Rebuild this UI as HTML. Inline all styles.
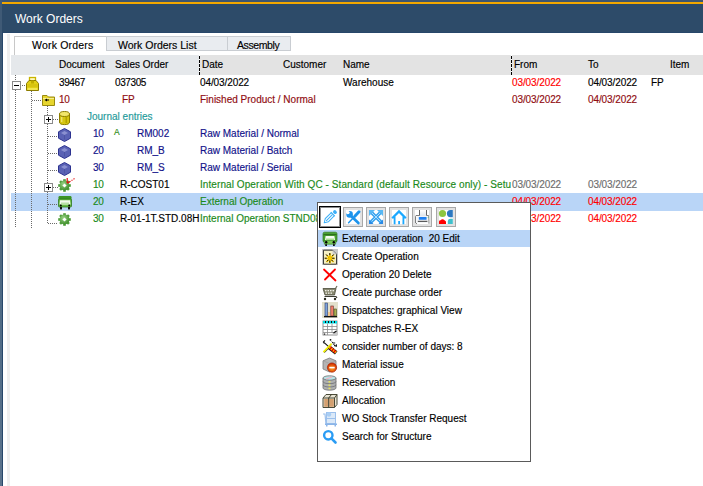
<!DOCTYPE html>
<html><head><meta charset="utf-8"><style>
html,body{margin:0;padding:0;}
body{width:703px;height:486px;position:relative;overflow:hidden;background:#fff;font-family:"Liberation Sans", sans-serif;}
.t{position:absolute;white-space:nowrap;-webkit-text-stroke:0.15px currentColor;}
svg{overflow:visible}
</style></head><body>
<div style="position:absolute;left:0px;top:0px;width:703px;height:33px;background:#2d4b69"></div>
<div style="position:absolute;left:0px;top:0px;width:703px;height:2px;background:#3d5670"></div>
<div style="position:absolute;left:2px;top:2px;width:701px;height:2px;background:#f2a800"></div>
<div style="position:absolute;left:0px;top:0px;width:2px;height:486px;background:linear-gradient(to bottom,#3f5a76 0px,#3f5a76 60px,#4a6279 180px,#4e6a85 300px,#5a728b 486px)"></div>
<div style="position:absolute;left:2px;top:32px;width:1px;height:454px;background:#27476a"></div>
<div style="position:absolute;left:2px;top:32px;width:701px;height:1px;background:#27476a"></div>
<div style="position:absolute;left:7px;top:34px;width:3px;height:452px;background:#efefef"></div>
<div class="t" style="left:15px;top:12px;font-size:12px;line-height:14px;color:#ffffff;-webkit-text-stroke:0;">Work Orders</div>
<div style="position:absolute;left:106px;top:36px;width:185px;height:15px;background:#e9ecf0;border:1px solid #c9cdd2;box-sizing:border-box"></div>
<div style="position:absolute;left:227px;top:37px;width:1px;height:13px;background:#c9cdd2"></div>
<div style="position:absolute;left:14px;top:36px;width:92px;height:19px;background:#ffffff;border:1px solid #c8c8c8;border-bottom:none;border-right:none;box-sizing:border-box"></div>
<div class="t" style="left:32px;top:39px;font-size:10.5px;line-height:12px;color:#000;letter-spacing:0.2px">Work Orders</div>
<div class="t" style="left:118px;top:39px;font-size:10.5px;line-height:12px;color:#000;">Work Orders List</div>
<div class="t" style="left:237px;top:39px;font-size:10.5px;line-height:12px;color:#000;letter-spacing:-0.4px">Assembly</div>
<div style="position:absolute;left:11px;top:55px;width:188px;height:20px;background:#e5e8eb"></div>
<div style="position:absolute;left:199px;top:55px;width:504px;height:20px;background:#e3e3e3"></div>
<div class="t" style="left:59px;top:59px;font-size:10px;line-height:12px;color:#000;">Document</div>
<div class="t" style="left:115px;top:59px;font-size:10px;line-height:12px;color:#000;">Sales Order</div>
<div class="t" style="left:202px;top:59px;font-size:10px;line-height:12px;color:#000;">Date</div>
<div class="t" style="left:283px;top:59px;font-size:10px;line-height:12px;color:#000;">Customer</div>
<div class="t" style="left:343px;top:59px;font-size:10px;line-height:12px;color:#000;">Name</div>
<div class="t" style="left:514px;top:59px;font-size:10px;line-height:12px;color:#000;">From</div>
<div class="t" style="left:588px;top:59px;font-size:10px;line-height:12px;color:#000;">To</div>
<div class="t" style="left:670px;top:59px;font-size:10px;line-height:12px;color:#000;">Item</div>
<svg style="position:absolute;left:199px;top:55px" width="1" height="20" viewBox="0 0 1 20"><rect x="0" y="0" width="1" height="20" fill="#fff"/><line x1="0.5" y1="1" x2="0.5" y2="20" stroke="#000" stroke-width="1" stroke-dasharray="3,1"/></svg>
<svg style="position:absolute;left:511px;top:55px" width="1" height="20" viewBox="0 0 1 20"><rect x="0" y="0" width="1" height="20" fill="#fff"/><line x1="0.5" y1="1" x2="0.5" y2="20" stroke="#000" stroke-width="1" stroke-dasharray="3,1"/></svg>
<div style="position:absolute;left:11px;top:193px;width:692px;height:18px;background:#b9d5f7"></div>
<svg style="position:absolute;left:15px;top:75px" width="1" height="6" viewBox="0 0 1 6"><line x1="0.5" y1="0" x2="0.5" y2="6" stroke="#6a6a6a" stroke-width="1" stroke-dasharray="1,1"/></svg>
<svg style="position:absolute;left:15px;top:90px" width="1" height="138" viewBox="0 0 1 138"><line x1="0.5" y1="0" x2="0.5" y2="138" stroke="#6a6a6a" stroke-width="1" stroke-dasharray="1,1"/></svg>
<svg style="position:absolute;left:31px;top:91px" width="1" height="137" viewBox="0 0 1 137"><line x1="0.5" y1="0" x2="0.5" y2="137" stroke="#6a6a6a" stroke-width="1" stroke-dasharray="1,1"/></svg>
<svg style="position:absolute;left:22px;top:85px" width="4" height="1" viewBox="0 0 4 1"><line x1="0" y1="0.5" x2="4" y2="0.5" stroke="#6a6a6a" stroke-width="1" stroke-dasharray="1,1"/></svg>
<svg style="position:absolute;left:32px;top:100px" width="10" height="1" viewBox="0 0 10 1"><line x1="0" y1="0.5" x2="10" y2="0.5" stroke="#6a6a6a" stroke-width="1" stroke-dasharray="1,1"/></svg>
<svg style="position:absolute;left:47px;top:106px" width="1" height="9" viewBox="0 0 1 9"><line x1="0.5" y1="0" x2="0.5" y2="9" stroke="#6a6a6a" stroke-width="1" stroke-dasharray="1,1"/></svg>
<svg style="position:absolute;left:47px;top:124px" width="1" height="59" viewBox="0 0 1 59"><line x1="0.5" y1="0" x2="0.5" y2="59" stroke="#6a6a6a" stroke-width="1" stroke-dasharray="1,1"/></svg>
<svg style="position:absolute;left:47px;top:192px" width="1" height="31" viewBox="0 0 1 31"><line x1="0.5" y1="0" x2="0.5" y2="31" stroke="#6a6a6a" stroke-width="1" stroke-dasharray="1,1"/></svg>
<svg style="position:absolute;left:53px;top:119px" width="6" height="1" viewBox="0 0 6 1"><line x1="0" y1="0.5" x2="6" y2="0.5" stroke="#6a6a6a" stroke-width="1" stroke-dasharray="1,1"/></svg>
<svg style="position:absolute;left:48px;top:136px" width="10" height="1" viewBox="0 0 10 1"><line x1="0" y1="0.5" x2="10" y2="0.5" stroke="#6a6a6a" stroke-width="1" stroke-dasharray="1,1"/></svg>
<svg style="position:absolute;left:48px;top:153px" width="10" height="1" viewBox="0 0 10 1"><line x1="0" y1="0.5" x2="10" y2="0.5" stroke="#6a6a6a" stroke-width="1" stroke-dasharray="1,1"/></svg>
<svg style="position:absolute;left:48px;top:170px" width="10" height="1" viewBox="0 0 10 1"><line x1="0" y1="0.5" x2="10" y2="0.5" stroke="#6a6a6a" stroke-width="1" stroke-dasharray="1,1"/></svg>
<svg style="position:absolute;left:53px;top:187px" width="5" height="1" viewBox="0 0 5 1"><line x1="0" y1="0.5" x2="5" y2="0.5" stroke="#6a6a6a" stroke-width="1" stroke-dasharray="1,1"/></svg>
<svg style="position:absolute;left:48px;top:204px" width="10" height="1" viewBox="0 0 10 1"><line x1="0" y1="0.5" x2="10" y2="0.5" stroke="#6a6a6a" stroke-width="1" stroke-dasharray="1,1"/></svg>
<svg style="position:absolute;left:48px;top:223px" width="10" height="1" viewBox="0 0 10 1"><line x1="0" y1="0.5" x2="10" y2="0.5" stroke="#6a6a6a" stroke-width="1" stroke-dasharray="1,1"/></svg>
<svg style="position:absolute;left:12px;top:81px" width="9" height="9" viewBox="0 0 9 9"><rect x="0.5" y="0.5" width="8" height="8" fill="#fff" stroke="#8a8a8a"/><line x1="2" y1="4.5" x2="7" y2="4.5" stroke="#000"/></svg>
<svg style="position:absolute;left:44px;top:115px" width="9" height="9" viewBox="0 0 9 9"><rect x="0.5" y="0.5" width="8" height="8" fill="#fff" stroke="#8a8a8a"/><line x1="2" y1="4.5" x2="7" y2="4.5" stroke="#000"/><line x1="4.5" y1="2" x2="4.5" y2="7" stroke="#000"/></svg>
<svg style="position:absolute;left:44px;top:183px" width="9" height="9" viewBox="0 0 9 9"><rect x="0.5" y="0.5" width="8" height="8" fill="#fff" stroke="#8a8a8a"/><line x1="2" y1="4.5" x2="7" y2="4.5" stroke="#000"/><line x1="4.5" y1="2" x2="4.5" y2="7" stroke="#000"/></svg>
<svg style="position:absolute;left:26px;top:77px" width="13" height="14" viewBox="0 0 13 14"><rect x="3.5" y="0.5" width="6" height="5" fill="#fff8c0" stroke="#c8b400" stroke-width="1.3"/>
<path d="M0.5 6.5 L3 3.5 L10 3.5 L12.5 6.5 L12.5 13.5 L0.5 13.5 Z" fill="#e2cf14" stroke="#8c7c00"/>
<rect x="5" y="3.5" width="3" height="3" fill="#c0ac00"/>
<rect x="1.5" y="7" width="10" height="3" fill="#d8c410"/>
<rect x="1.5" y="11" width="10" height="2" fill="#f2e650"/></svg>
<svg style="position:absolute;left:42px;top:94px" width="13" height="12" viewBox="0 0 13 12"><path d="M0.5 1.5 L5 1.5 L6.5 3 L12.5 3 L12.5 11.5 L0.5 11.5 Z" fill="#e6d52e" stroke="#9a8a10"/>
<path d="M1 4.5 L12 4.5" stroke="#f6ee90" stroke-width="1"/>
<path d="M2.5 6 L5 4.5 L5 7.5 Z M4.5 5.5 L7 5.5 L7 6.5 L4.5 6.5 Z" fill="#000"/></svg>
<svg style="position:absolute;left:59px;top:111px" width="11" height="14" viewBox="0 0 11 14"><path d="M0.5 3 L0.5 11 A5 2.6 0 0 0 10.5 11 L10.5 3" fill="#d6c612" stroke="#8c7c00"/>
<ellipse cx="5.5" cy="3" rx="5" ry="2.5" fill="#f2e66a" stroke="#8c7c00"/>
<rect x="6.5" y="5.5" width="1.6" height="6.5" fill="#b4a400"/>
<rect x="2" y="6" width="1.4" height="5" fill="#eee070"/></svg>
<svg style="position:absolute;left:58px;top:128px" width="13" height="14" viewBox="0 0 13 14"><path d="M6.5 0.5 L12.5 3.8 L12.5 10.2 L6.5 13.5 L0.5 10.2 L0.5 3.8 Z" fill="#5a62b4" stroke="#2c3290"/>
<path d="M3 5 L6.5 3 L10 5 L6.5 7 Z" fill="#8a90d0"/>
<path d="M6.5 7 L6.5 11.5" stroke="#4a50a0" stroke-width="0.8"/></svg>
<svg style="position:absolute;left:58px;top:145px" width="13" height="14" viewBox="0 0 13 14"><path d="M6.5 0.5 L12.5 3.8 L12.5 10.2 L6.5 13.5 L0.5 10.2 L0.5 3.8 Z" fill="#5a62b4" stroke="#2c3290"/>
<path d="M3 5 L6.5 3 L10 5 L6.5 7 Z" fill="#8a90d0"/>
<path d="M6.5 7 L6.5 11.5" stroke="#4a50a0" stroke-width="0.8"/></svg>
<svg style="position:absolute;left:58px;top:162px" width="13" height="14" viewBox="0 0 13 14"><path d="M6.5 0.5 L12.5 3.8 L12.5 10.2 L6.5 13.5 L0.5 10.2 L0.5 3.8 Z" fill="#5a62b4" stroke="#2c3290"/>
<path d="M3 5 L6.5 3 L10 5 L6.5 7 Z" fill="#8a90d0"/>
<path d="M6.5 7 L6.5 11.5" stroke="#4a50a0" stroke-width="0.8"/></svg>
<svg style="position:absolute;left:58px;top:179px" width="13" height="14" viewBox="0 0 13 14"><defs><radialGradient id="gg" cx="0.4" cy="0.35" r="0.7"><stop offset="0" stop-color="#9ad486"/><stop offset="1" stop-color="#3a8a26"/></radialGradient></defs><rect x="5.2" y="0.2" width="2.6" height="3" fill="#4e9e38" transform="rotate(0.0 6.5 6.5)"/><rect x="5.2" y="0.2" width="2.6" height="3" fill="#4e9e38" transform="rotate(45.0 6.5 6.5)"/><rect x="5.2" y="0.2" width="2.6" height="3" fill="#4e9e38" transform="rotate(90.0 6.5 6.5)"/><rect x="5.2" y="0.2" width="2.6" height="3" fill="#4e9e38" transform="rotate(135.0 6.5 6.5)"/><rect x="5.2" y="0.2" width="2.6" height="3" fill="#4e9e38" transform="rotate(180.0 6.5 6.5)"/><rect x="5.2" y="0.2" width="2.6" height="3" fill="#4e9e38" transform="rotate(225.0 6.5 6.5)"/><rect x="5.2" y="0.2" width="2.6" height="3" fill="#4e9e38" transform="rotate(270.0 6.5 6.5)"/><rect x="5.2" y="0.2" width="2.6" height="3" fill="#4e9e38" transform="rotate(315.0 6.5 6.5)"/><circle cx="6.5" cy="6.5" r="4.9" fill="url(#gg)"/><path d="M6.5 4.4 L8.6 6.5 L6.5 8.6 L4.4 6.5 Z" fill="#fff"/></svg>
<svg style="position:absolute;left:66px;top:177px" width="9" height="7" viewBox="0 0 9 7"><path d="M1.2 6.2 L1.2 1 M1.2 6.2 L4.5 4.2 M5.5 3.5 L6.5 3 M7.5 2.2 L8.5 1.6" stroke="#e81010" stroke-width="1.2" fill="none"/></svg>
<svg style="position:absolute;left:58px;top:196px" width="14" height="14" viewBox="0 0 14 14"><rect x="0.5" y="0" width="13" height="4.5" rx="1.2" fill="#3a9426"/>
<rect x="0.5" y="3" width="13" height="8" rx="1" fill="#66bb44" stroke="#2f7a1e" stroke-width="0.8"/>
<path d="M2 4.2 L12 4.2 L12.5 8.5 L1.5 8.5 Z" fill="#f2faee"/>
<rect x="3" y="6.5" width="8" height="2" fill="#b8e0a8"/>
<circle cx="2.8" cy="9.6" r="1" fill="#000"/><circle cx="11.2" cy="9.6" r="1" fill="#000"/>
<rect x="2" y="11" width="2" height="2.4" fill="#111"/><rect x="10" y="11" width="2" height="2.4" fill="#111"/></svg>
<svg style="position:absolute;left:58px;top:213px" width="13" height="14" viewBox="0 0 13 14"><defs><radialGradient id="gg" cx="0.4" cy="0.35" r="0.7"><stop offset="0" stop-color="#9ad486"/><stop offset="1" stop-color="#3a8a26"/></radialGradient></defs><rect x="5.2" y="0.2" width="2.6" height="3" fill="#4e9e38" transform="rotate(0.0 6.5 6.5)"/><rect x="5.2" y="0.2" width="2.6" height="3" fill="#4e9e38" transform="rotate(45.0 6.5 6.5)"/><rect x="5.2" y="0.2" width="2.6" height="3" fill="#4e9e38" transform="rotate(90.0 6.5 6.5)"/><rect x="5.2" y="0.2" width="2.6" height="3" fill="#4e9e38" transform="rotate(135.0 6.5 6.5)"/><rect x="5.2" y="0.2" width="2.6" height="3" fill="#4e9e38" transform="rotate(180.0 6.5 6.5)"/><rect x="5.2" y="0.2" width="2.6" height="3" fill="#4e9e38" transform="rotate(225.0 6.5 6.5)"/><rect x="5.2" y="0.2" width="2.6" height="3" fill="#4e9e38" transform="rotate(270.0 6.5 6.5)"/><rect x="5.2" y="0.2" width="2.6" height="3" fill="#4e9e38" transform="rotate(315.0 6.5 6.5)"/><circle cx="6.5" cy="6.5" r="4.9" fill="url(#gg)"/><path d="M6.5 4.4 L8.6 6.5 L6.5 8.6 L4.4 6.5 Z" fill="#fff"/></svg>
<div class="t" style="left:59px;top:77px;font-size:10px;line-height:12px;color:#000;letter-spacing:-0.4px;">39467</div>
<div class="t" style="left:115px;top:77px;font-size:10px;line-height:12px;color:#000;letter-spacing:-0.4px;">037305</div>
<div class="t" style="left:200px;top:77px;font-size:10px;line-height:12px;color:#000;letter-spacing:-0.1px;">04/03/2022</div>
<div class="t" style="left:343px;top:77px;font-size:10px;line-height:12px;color:#000;">Warehouse</div>
<div class="t" style="left:512px;top:77px;font-size:10px;line-height:12px;color:#ff0000;letter-spacing:-0.1px;">03/03/2022</div>
<div class="t" style="left:588px;top:77px;font-size:10px;line-height:12px;color:#000;letter-spacing:-0.1px;">04/03/2022</div>
<div class="t" style="left:651px;top:77px;font-size:10px;line-height:12px;color:#000;">FP</div>
<div class="t" style="left:59px;top:94px;font-size:10px;line-height:12px;color:#900c10;letter-spacing:-0.4px;">10</div>
<div class="t" style="left:122px;top:94px;font-size:10px;line-height:12px;color:#900c10;">FP</div>
<div class="t" style="left:200px;top:94px;font-size:10px;line-height:12px;color:#900c10;">Finished Product / Normal</div>
<div class="t" style="left:512px;top:94px;font-size:10px;line-height:12px;color:#900c10;letter-spacing:-0.1px;">03/03/2022</div>
<div class="t" style="left:588px;top:94px;font-size:10px;line-height:12px;color:#900c10;letter-spacing:-0.1px;">04/03/2022</div>
<div class="t" style="left:87px;top:111px;font-size:10px;line-height:12px;color:#1e9a9a;">Journal entries</div>
<div class="t" style="left:93px;top:128px;font-size:10px;line-height:12px;color:#12128a;letter-spacing:-0.4px;">10</div>
<div class="t" style="left:114px;top:126px;font-size:8.5px;line-height:12px;color:#2a8a10;">A</div>
<div class="t" style="left:137px;top:128px;font-size:10px;line-height:12px;color:#12128a;">RM002</div>
<div class="t" style="left:200px;top:128px;font-size:10px;line-height:12px;color:#12128a;">Raw Material / Normal</div>
<div class="t" style="left:93px;top:145px;font-size:10px;line-height:12px;color:#12128a;letter-spacing:-0.4px;">20</div>
<div class="t" style="left:137px;top:145px;font-size:10px;line-height:12px;color:#12128a;">RM_B</div>
<div class="t" style="left:200px;top:145px;font-size:10px;line-height:12px;color:#12128a;">Raw Material / Batch</div>
<div class="t" style="left:93px;top:162px;font-size:10px;line-height:12px;color:#12128a;letter-spacing:-0.4px;">30</div>
<div class="t" style="left:137px;top:162px;font-size:10px;line-height:12px;color:#12128a;">RM_S</div>
<div class="t" style="left:200px;top:162px;font-size:10px;line-height:12px;color:#12128a;">Raw Material / Serial</div>
<div class="t" style="left:93px;top:179px;font-size:10px;line-height:12px;color:#1a8a1a;letter-spacing:-0.4px;">10</div>
<div class="t" style="left:120px;top:179px;font-size:10px;line-height:12px;color:#000;">R-COST01</div>
<div class="t" style="left:200px;top:179px;font-size:10px;line-height:12px;color:#1a8a1a;width:311px;overflow:hidden;letter-spacing:0.08px">Internal Operation With QC - Standard (default Resource only) - Setup</div>
<div class="t" style="left:512px;top:179px;font-size:10px;line-height:12px;color:#6e6e6e;letter-spacing:-0.1px;">03/03/2022</div>
<div class="t" style="left:588px;top:179px;font-size:10px;line-height:12px;color:#6e6e6e;letter-spacing:-0.1px;">03/03/2022</div>
<div class="t" style="left:93px;top:196px;font-size:10px;line-height:12px;color:#1a8a1a;letter-spacing:-0.4px;">20</div>
<div class="t" style="left:120px;top:196px;font-size:10px;line-height:12px;color:#000;">R-EX</div>
<div class="t" style="left:200px;top:196px;font-size:10px;line-height:12px;color:#1a8a1a;">External Operation</div>
<div class="t" style="left:512px;top:196px;font-size:10px;line-height:12px;color:#ff0000;letter-spacing:-0.1px;">04/03/2022</div>
<div class="t" style="left:588px;top:196px;font-size:10px;line-height:12px;color:#ff0000;letter-spacing:-0.1px;">04/03/2022</div>
<div class="t" style="left:93px;top:213px;font-size:10px;line-height:12px;color:#1a8a1a;letter-spacing:-0.4px;">30</div>
<div class="t" style="left:120px;top:213px;font-size:10px;line-height:12px;color:#000;">R-01-1T.STD.08H</div>
<div class="t" style="left:200px;top:213px;font-size:10px;line-height:12px;color:#1a8a1a;">Internal Operation STND08</div>
<div class="t" style="left:512px;top:213px;font-size:10px;line-height:12px;color:#ff0000;letter-spacing:-0.1px;">04/03/2022</div>
<div class="t" style="left:588px;top:213px;font-size:10px;line-height:12px;color:#ff0000;letter-spacing:-0.1px;">04/03/2022</div>
<div style="position:absolute;left:317px;top:202px;width:214px;height:260px;background:#fff;border:1px solid #5a5a5a;box-sizing:border-box"></div>
<div style="position:absolute;left:319px;top:206px;width:22px;height:22px;border:1px solid #000;box-sizing:border-box;background:#fff;box-shadow:inset 0 0 0 1px rgba(0,0,0,0.45)"></div>
<div style="position:absolute;left:343px;top:207px;width:20px;height:20px;border:1px solid #a8a8a8;box-sizing:border-box;background:#fff;box-shadow:inset 0 0 0 2px #e2e2e2"></div>
<div style="position:absolute;left:366px;top:207px;width:20px;height:20px;border:1px solid #a8a8a8;box-sizing:border-box;background:#fff;box-shadow:inset 0 0 0 2px #e2e2e2"></div>
<div style="position:absolute;left:389px;top:207px;width:20px;height:20px;border:1px solid #a8a8a8;box-sizing:border-box;background:#fff;box-shadow:inset 0 0 0 2px #e2e2e2"></div>
<div style="position:absolute;left:412px;top:207px;width:20px;height:20px;border:1px solid #a8a8a8;box-sizing:border-box;background:#fff;box-shadow:inset 0 0 0 2px #e2e2e2"></div>
<div style="position:absolute;left:436px;top:207px;width:20px;height:20px;border:1px solid #a8a8a8;box-sizing:border-box;background:#fff;box-shadow:inset 0 0 0 2px #e2e2e2"></div>
<svg style="position:absolute;left:319px;top:206px" width="22" height="22" viewBox="0 0 22 22"><g transform="rotate(-45 11 11)" fill="none" stroke="#3cb0f8" stroke-width="1" stroke-linecap="round">
<path d="M2.8 11 L6.5 8.8 L14 8.8 M2.8 11 L6.5 13.2 L14 13.2 M6 11 L14 11"/>
<path d="M15 8.6 L15 13.4" stroke-width="1.3"/></g>
<g transform="rotate(-45 11 11)"><rect x="16.3" y="9" width="3.4" height="4" rx="1.6" fill="#3cb0f8"/></g></svg>
<svg style="position:absolute;left:343px;top:207px" width="20" height="20" viewBox="0 0 20 20"><g stroke="#1e94ec" fill="none" stroke-linecap="round">
<path d="M16 4.8 L11.8 9.2" stroke-width="3"/>
<path d="M11.8 9.2 L5.6 15.8" stroke-width="1.5"/>
<path d="M8.6 9.6 L15.4 16" stroke-width="2.7"/></g>
<circle cx="6.6" cy="7.4" r="3.3" fill="#1e94ec"/>
<circle cx="4.9" cy="5.6" r="1.7" fill="#fff"/>
<path d="M3 4 L6 4 L6 6.5 L3 6.5 Z" fill="#fff" transform="rotate(45 4.5 5.2)"/></svg>
<svg style="position:absolute;left:366px;top:207px" width="20" height="20" viewBox="0 0 20 20"><g stroke="#3aa4ee" stroke-width="3.4" fill="none">
<path d="M5 5 L15.5 15.5 M15 5 L4.5 15.5"/></g>
<g stroke="#a8dcff" stroke-width="1" fill="none"><path d="M5.5 5.5 L14.5 14.5 M14.5 5.5 L5.5 14.5"/></g>
<path d="M3 3 L9 3 L3 9 Z M17 3 L11 3 L17 9 Z" fill="#58b8f4"/>
<path d="M3 12.5 L3 17 L7.5 17 Z M17 12.5 L17 17 L12.5 17 Z" fill="#2a8ae6"/></svg>
<svg style="position:absolute;left:389px;top:207px" width="20" height="20" viewBox="0 0 20 20"><g stroke="#1aa8ff" stroke-width="1.8" fill="none" stroke-linejoin="miter">
<path d="M3.2 11.2 L10 4.4 L16.8 11.2" stroke-width="2.2"/><path d="M5.6 9.5 L5.6 17.2 M14.4 9.5 L14.4 17.2"/></g>
<rect x="9.2" y="14" width="1.8" height="3.2" fill="#1aa8ff"/></svg>
<svg style="position:absolute;left:412px;top:207px" width="20" height="20" viewBox="0 0 20 20"><defs><linearGradient id="pg" x1="0" y1="0" x2="0" y2="1"><stop offset="0" stop-color="#ffffff"/><stop offset="1" stop-color="#d8dee6"/></linearGradient></defs>
<rect x="7.5" y="3" width="7" height="7.5" fill="url(#pg)"/>
<path d="M7.5 3 L7.5 8.5 M14.5 3 L14.5 8.5" stroke="#555" stroke-width="0.9"/>
<path d="M7.5 8.5 L4 8.5 L3.5 9.5 L3.5 16 L5 16.8 M14.5 8.5 L16.5 8.5 L16.8 16.5" stroke="#707070" stroke-width="0.9" fill="none"/>
<rect x="4.3" y="9.2" width="12" height="6.8" fill="#f4f6f8"/>
<rect x="6.8" y="10" width="7.8" height="2.8" rx="0.6" fill="#1e80f2"/>
<rect x="5.8" y="13.8" width="9.6" height="1.1" fill="#4a4a4a"/>
<circle cx="16.2" cy="10.2" r="0.5" fill="#40c080"/></svg>
<svg style="position:absolute;left:436px;top:207px" width="20" height="20" viewBox="0 0 20 20"><circle cx="6.5" cy="6.5" r="3.6" fill="#8cc63f"/>
<path d="M16.8 3 L14.5 3 A3.6 3.6 0 0 0 14.5 10.2 L16.8 10.2 Z" fill="#2c78c0"/>
<path d="M3 17 L10 17 L10 15.5 A1.6 1.6 0 0 0 8.8 13.6 A2.4 2.4 0 0 0 4.6 13.2 A1.6 1.6 0 0 0 3 15.2 Z" fill="#ff0000"/>
<path d="M16.8 17 L11.8 17 L11.8 14 A2.6 2.6 0 0 1 14.4 11.8 L16.8 11.8 Z" fill="#3ec0cc"/></svg>
<div style="position:absolute;left:318px;top:230px;width:212px;height:17px;background:#b9d5f7"></div>
<div class="t" style="left:342px;top:233px;font-size:10px;line-height:12px;color:#000;">External operation&nbsp; 20 Edit</div>
<div class="t" style="left:342px;top:251px;font-size:10px;line-height:12px;color:#000;">Create Operation</div>
<div class="t" style="left:342px;top:269px;font-size:10px;line-height:12px;color:#000;">Operation 20 Delete</div>
<div class="t" style="left:342px;top:287px;font-size:10px;line-height:12px;color:#000;">Create purchase order</div>
<div class="t" style="left:342px;top:305px;font-size:10px;line-height:12px;color:#000;">Dispatches: graphical View</div>
<div class="t" style="left:342px;top:323px;font-size:10px;line-height:12px;color:#000;">Dispatches R-EX</div>
<div class="t" style="left:342px;top:341px;font-size:10px;line-height:12px;color:#000;">consider number of days: 8</div>
<div class="t" style="left:342px;top:359px;font-size:10px;line-height:12px;color:#000;">Material issue</div>
<div class="t" style="left:342px;top:377px;font-size:10px;line-height:12px;color:#000;">Reservation</div>
<div class="t" style="left:342px;top:395px;font-size:10px;line-height:12px;color:#000;">Allocation</div>
<div class="t" style="left:342px;top:413px;font-size:10px;line-height:12px;color:#000;">WO Stock Transfer Request</div>
<div class="t" style="left:342px;top:431px;font-size:10px;line-height:12px;color:#000;">Search for Structure</div>
<svg style="position:absolute;left:322px;top:231px" width="16" height="16" viewBox="0 0 16 16"><rect x="1" y="1.2" width="14" height="10" rx="1.6" fill="#4aa232" stroke="#2e7a1e" stroke-width="0.7"/>
<rect x="1.5" y="3" width="13" height="1.2" fill="#2e6e1e"/>
<path d="M3.6 5 L12.4 5 L13 9 L3 9 Z" fill="#f6fcf2"/>
<path d="M4 7.5 L12 7.5 L12.4 10 L3.6 10 Z" fill="#a8dc90"/>
<path d="M2 9.5 L14 9.5 L13.6 13.2 L2.4 13.2 Z" fill="#78c856" stroke="#2e7a1e" stroke-width="0.6"/>
<circle cx="4.2" cy="11.3" r="1.2" fill="#000"/><circle cx="11.8" cy="11.3" r="1.2" fill="#000"/>
<rect x="3.2" y="13.2" width="1.8" height="1.8" fill="#111"/><rect x="11" y="13.2" width="1.8" height="1.8" fill="#111"/></svg>
<svg style="position:absolute;left:322px;top:249px" width="16" height="16" viewBox="0 0 16 16"><rect x="0" y="0" width="16" height="16" fill="#c9c9c9"/>
<path d="M1.5 1.2 L10.5 1.2 L14.5 5.2 L14.5 15.2 L1.5 15.2 Z" fill="#f6f0c4" stroke="#2a2a2a" stroke-width="0.9"/>
<path d="M10.5 1.2 L10.5 5.2 L14.5 5.2 Z" fill="#d0d0d0"/>
<g stroke="#f6c800" stroke-width="1.6"><path d="M3 9.5 L13 9.5 M8 4.5 L8 14.5 M4.5 6 L11.5 13 M11.5 6 L4.5 13"/></g>
<g stroke="#111" stroke-width="1" stroke-dasharray="2.2,1.6"><path d="M2.6 9.2 L13.4 9.2 M7.8 4 L7.8 14.5 M4 5.4 L11.8 13.2 M11.8 5.4 L4 13.2"/></g>
<circle cx="7.8" cy="9.2" r="1.8" fill="#f8c800"/></svg>
<svg style="position:absolute;left:322px;top:267px" width="16" height="16" viewBox="0 0 16 16"><path d="M2 2.5 L13.5 13.5 M13 2.5 L3 12.5" stroke="#ff0000" stroke-width="1.8" stroke-linecap="round"/></svg>
<svg style="position:absolute;left:322px;top:285px" width="16" height="16" viewBox="0 0 16 16"><path d="M1 3.5 L14 3.5 L12.5 10 L3 10 Z" fill="#888870" stroke="#4a4a3a" stroke-width="0.8"/>
<g fill="#f0f0e8"><rect x="3" y="5" width="1.5" height="1.3"/><rect x="5.5" y="5" width="1.5" height="1.3"/><rect x="8" y="5" width="1.5" height="1.3"/><rect x="10.5" y="5" width="1.5" height="1.3"/>
<rect x="3.5" y="7.5" width="1.5" height="1.3"/><rect x="6" y="7.5" width="1.5" height="1.3"/><rect x="8.5" y="7.5" width="1.5" height="1.3"/></g>
<path d="M13.5 3.5 L15 1" stroke="#6a6a58" stroke-width="1.2"/>
<path d="M2.5 11.5 L14 11.5 L15 13" stroke="#3a3a30" stroke-width="1.2" fill="none"/>
<circle cx="3" cy="14" r="1.2" fill="#2a2a20"/><circle cx="13" cy="14" r="1.2" fill="#2a2a20"/></svg>
<svg style="position:absolute;left:322px;top:302px" width="16" height="16" viewBox="0 0 16 16"><rect x="0" y="0" width="16" height="16" fill="#e2e0cc"/>
<rect x="3" y="1" width="2.5" height="13" fill="#7ea4dc" stroke="#2a3a6a" stroke-width="0.6"/>
<rect x="6" y="10" width="2.2" height="4" fill="#f0c890"/>
<rect x="8.8" y="4" width="2.5" height="10" fill="#f0806c" stroke="#6a2a2a" stroke-width="0.6"/>
<rect x="12" y="7" width="2.5" height="7" fill="#a8b050" stroke="#4a4a20" stroke-width="0.6"/>
<rect x="2" y="14" width="13" height="1.3" fill="#111"/></svg>
<svg style="position:absolute;left:322px;top:320px" width="16" height="16" viewBox="0 0 16 16"><rect x="1" y="1" width="14" height="14" fill="#fff" stroke="#777" stroke-width="0.8"/>
<rect x="1" y="1" width="14" height="2.5" fill="#00e0ea"/>
<g fill="#111"><rect x="3" y="1" width="1" height="2"/><rect x="6" y="1" width="1" height="2"/><rect x="9" y="1" width="1" height="2"/><rect x="12" y="1" width="1" height="2"/></g>
<g stroke="#8a8a8a" stroke-width="0.8"><path d="M1 6.5 L15 6.5 M1 9.5 L15 9.5 M1 12.5 L12 12.5 M5.5 3.5 L5.5 15 M10 3.5 L10 13"/></g>
<path d="M9 15 L15 15 L15 10 Z" fill="#c8c8c8"/><path d="M11.5 13 L14.5 11" stroke="#111" stroke-width="1.2"/>
<rect x="2" y="13.5" width="1.2" height="1.2" fill="#111"/></svg>
<svg style="position:absolute;left:322px;top:338px" width="16" height="16" viewBox="0 0 16 16"><path d="M2.2 4.6 L7.4 9.4" stroke="#111" stroke-width="1.1"/>
<path d="M3 2.4 L1.4 4 L2.4 5.4" stroke="#111" stroke-width="1.1" fill="none"/>
<path d="M2.4 14.8 L9.2 7.8" stroke="#111" stroke-width="0.8"/>
<path d="M1.4 14.2 L9.6 5.6" stroke="#f0f000" stroke-width="1.7"/>
<path d="M7.2 9.4 L14.2 14.8" stroke="#111" stroke-width="4"/>
<path d="M7.4 9.2 L13.8 14.4" stroke="#ee0000" stroke-width="2.8"/>
<path d="M7.4 9.2 L13.8 14.4" stroke="#ffe000" stroke-width="2.8" stroke-dasharray="0.9,1.6"/>
<circle cx="8.5" cy="1.8" r="0.9" fill="#111"/>
<rect x="10.6" y="4" width="2.6" height="2.4" fill="#8a8a8a"/>
<path d="M9.8 3.6 L11 5 M11.6 6.2 L13.2 8.4 L14.4 6.6 L14.4 8.8" stroke="#111" stroke-width="1" fill="none"/></svg>
<svg style="position:absolute;left:322px;top:357px" width="16" height="16" viewBox="0 0 16 16"><path d="M7.5 1 L14 3.8 L14 12 L7.5 15 L1 12 L1 3.8 Z" fill="#b4b4b4" stroke="#7a7a7a" stroke-width="0.8"/>
<path d="M1 3.8 L7.5 6.5 L14 3.8" fill="none" stroke="#9a9a9a" stroke-width="0.6"/>
<defs><radialGradient id="og" cx="0.5" cy="0.6" r="0.6"><stop offset="0" stop-color="#ffa020"/><stop offset="1" stop-color="#d02800"/></radialGradient></defs><circle cx="10" cy="10.6" r="4.6" fill="url(#og)" stroke="#a82000" stroke-width="0.7"/>
<rect x="7.3" y="9.8" width="5.4" height="1.6" fill="#fff"/></svg>
<svg style="position:absolute;left:322px;top:375px" width="16" height="16" viewBox="0 0 16 16"><path d="M1 3 L1 13 A6.5 2.2 0 0 0 14 13 L14 3" fill="#aeb0b2" stroke="#6e7072" stroke-width="0.8"/>
<ellipse cx="7.5" cy="3" rx="6.5" ry="2.2" fill="#b8e4e8" stroke="#6e7072" stroke-width="0.8"/>
<path d="M4 4 L10 2" stroke="#f4b0c0" stroke-width="1.2"/>
<g fill="none" stroke="#6e7072" stroke-width="0.8"><path d="M1 6.5 A6.5 2.2 0 0 0 14 6.5 M1 9.8 A6.5 2.2 0 0 0 14 9.8"/></g>
<g fill="#e8e060"><rect x="6.5" y="6" width="2" height="1.6"/><rect x="6.5" y="9.4" width="2" height="1.6"/><rect x="6.5" y="12.6" width="2" height="1.6"/></g></svg>
<svg style="position:absolute;left:322px;top:393px" width="16" height="16" viewBox="0 0 16 16"><path d="M1 5 L4 1.5 L15 1.5 L15 11.5 L12.5 14.5 L1 14.5 Z" fill="#e8e4d4" stroke="#4a4a38" stroke-width="1"/>
<path d="M1 5 L12.5 5 L15 1.5 M12.5 5 L12.5 14.5" fill="none" stroke="#4a4a38" stroke-width="1"/>
<rect x="2.2" y="6" width="4" height="7.8" fill="#d4a070"/><rect x="7.2" y="6" width="4.6" height="7.8" fill="#d4a070"/>
<path d="M6.7 5 L6.7 14.5 M6.7 5 L9.5 1.5" stroke="#3a3a28" stroke-width="1" fill="none"/></svg>
<svg style="position:absolute;left:322px;top:411px" width="16" height="16" viewBox="0 0 16 16"><path d="M1 3 L3 3 L4 13.5" stroke="#9cc0ec" stroke-width="1.2" fill="none"/>
<rect x="4.5" y="1.5" width="9" height="11" fill="#dbe9f8" stroke="#9cc0ec" stroke-width="1"/>
<circle cx="7" cy="3.5" r="2.2" fill="#a8cdf4"/>
<path d="M4.5 7.5 L13.5 7.5" stroke="#9cc0ec" stroke-width="1"/>
<rect x="3" y="12.5" width="12" height="1.5" fill="#8ab4e8"/>
<rect x="4" y="14" width="1.5" height="1.5" fill="#8ab4e8"/><rect x="12.5" y="14" width="1.5" height="1.5" fill="#8ab4e8"/></svg>
<svg style="position:absolute;left:322px;top:429px" width="16" height="16" viewBox="0 0 16 16"><circle cx="6.3" cy="6.3" r="4.2" fill="none" stroke="#2a9cf4" stroke-width="2.4"/>
<path d="M9.4 9.4 L13.5 13.5" stroke="#2a9cf4" stroke-width="2.6" stroke-linecap="round"/></svg>
</body></html>
